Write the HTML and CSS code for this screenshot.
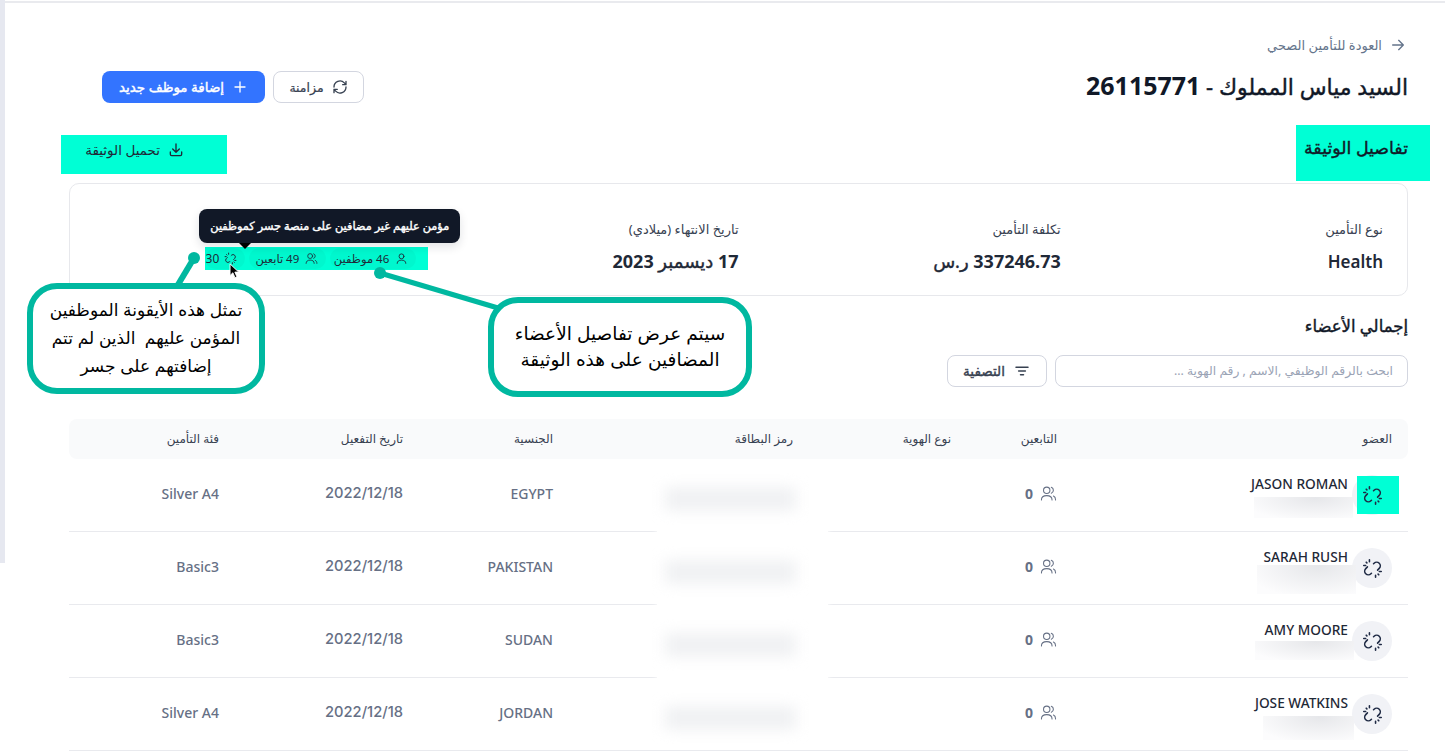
FILE: index.html
```html
<!DOCTYPE html>
<html lang="ar" dir="rtl">
  <head>
    <meta charset="UTF-8">
    <title>تفاصيل الوثيقة</title>
    <link rel="stylesheet" href="styles.css">
  </head>
  <body>
    <svg class="sprite" aria-hidden="true">
      <symbol id="i-unlink" viewBox="0 0 24 24" fill="none" stroke="currentColor" stroke-width="1.8" stroke-linecap="round">
        <path d="M13.200 6.600l.6-.6a4.200 4.200 0 0 1 5.900 0 4.200 4.200 0 0 1 0 5.900l-1.900 1.900"/>
        <path d="M10.800 17.400l-.6.6a4.200 4.200 0 0 1-5.900 0 4.200 4.200 0 0 1 0-5.900l1.900-1.900"/>
        <path d="M8.500 2v2.200M2 8.500h2.200M4.800 4.800l.8.8M15.500 19.800V22M19.800 15.500H22M18.400 18.400l.8.8"/>
      </symbol>
      <symbol id="i-user" viewBox="0 0 24 24" fill="none" stroke="currentColor" stroke-width="1.6" stroke-linecap="round">
        <circle cx="12" cy="8" r="4.500"/>
        <path d="M4 21c0-4.200 3.400-6 8-6s8 1.800 8 6"/>
      </symbol>
      <symbol id="i-users" viewBox="0 0 24 24" fill="none" stroke="currentColor" stroke-width="1.500" stroke-linecap="round">
        <circle cx="9.500" cy="7.500" r="4.500"/>
        <path d="M2 21c0-4.200 3-6 7.500-6s7.500 1.800 7.500 6"/>
        <path d="M16 3.300a4.500 4.500 0 0 1 0 8.400M19 15.500c1.900.8 3 2.600 3 5.500"/>
      </symbol>
    </svg>

    <div class="top-line"></div>
    <div class="layout">
      <div class="side-strip"></div>
      <main class="main">
        <a class="back-link">
          <svg class="icon-16" viewBox="0 0 24 24" fill="none" stroke="currentColor" stroke-width="2" stroke-linecap="round" stroke-linejoin="round"><path d="M4 12h16M13 5l7 7-7 7"/></svg>
          العودة للتأمين الصحي
        </a>

        <div class="page-head">
          <h1>السيد مياس المملوك - <span class="num">26115771</span></h1>
          <div class="actions">
            <button class="btn btn-outline btn-sync" type="button">
              <svg class="icon-16" viewBox="0 0 24 24" fill="none" stroke="currentColor" stroke-width="2" stroke-linecap="round" stroke-linejoin="round"><path d="M3 12a9 9 0 0 1 15.500-6.200L21 8.500M21 3.500v5h-5"/><path d="M21 12a9 9 0 0 1-15.500 6.200L3 15.500M3 20.500v-5h5"/></svg>
              مزامنة
            </button>
            <button class="btn btn-primary" type="button">
              <svg class="icon-16" viewBox="0 0 24 24" fill="none" stroke="currentColor" stroke-width="2" stroke-linecap="round"><path d="M12 4.500v15M4.500 12h15"/></svg>
              إضافة موظف جديد
            </button>
          </div>
        </div>

        <div class="section-head">
          <h2 class="section-title">تفاصيل الوثيقة</h2>
          <button class="btn-download" type="button">
            <svg class="icon-16" viewBox="0 0 24 24" fill="none" stroke="currentColor" stroke-width="2" stroke-linecap="round" stroke-linejoin="round"><path d="M12 3v12M7 10.500l5 5 5-5"/><path d="M3.500 15v3.500a2 2 0 0 0 2 2h13a2 2 0 0 0 2-2V15"/></svg>
            تحميل الوثيقة
          </button>
        </div>

        <section class="doc-card">
          <div class="doc-col">
            <div class="doc-label">نوع التأمين</div>
            <div class="doc-value"><span class="num value-latin">Health</span></div>
          </div>
          <div class="doc-col">
            <div class="doc-label">تكلفة التأمين</div>
            <div class="doc-value"><span class="num">337246.73</span> ر.س</div>
          </div>
          <div class="doc-col">
            <div class="doc-label">تاريخ الانتهاء (ميلادي)</div>
            <div class="doc-value"><span class="num">17</span> ديسمبر <span class="num">2023</span></div>
          </div>
          <div class="doc-col doc-col-pills">
            <div class="pills">
              <span class="pill pill-staff"><svg class="icon-13"><use href="#i-user"/></svg>46 موظفين</span>
              <span class="pill pill-deps"><svg class="icon-13"><use href="#i-users"/></svg>49 تابعين</span>
              <span class="pill pill-last"><svg class="icon-13"><use href="#i-unlink"/></svg>30</span>
              <div class="tooltip">مؤمن عليهم غير مضافين على منصة جسر كموظفين</div>
              <svg class="cursor" viewBox="0 0 12 18"><path d="M1 1v13l3.200-3 2.300 5.500 2.200-1-2.300-5.300h4.300z" fill="#000" stroke="#fff" stroke-width="1"/></svg>
            </div>
          </div>
        </section>

        <h2 class="members-title">إجمالي الأعضاء</h2>
        <div class="toolbar">
          <div class="search-box">ابحث بالرقم الوظيفي ,الاسم , رقم الهوية ...</div>
          <button class="btn btn-outline btn-filter" type="button">
            <svg class="icon-18" viewBox="0 0 24 24" fill="none" stroke="currentColor" stroke-width="2" stroke-linecap="round"><path d="M4 7h16M7.500 12h9M10 17h4"/></svg>
            التصفية
          </button>
        </div>

        <div class="table">
          <div class="table-head">
            <div>العضو</div>
            <div>التابعين</div>
            <div>نوع الهوية</div>
            <div>رمز البطاقة</div>
            <div>الجنسية</div>
            <div>تاريخ التفعيل</div>
            <div>فئة التأمين</div>
          </div>

          <div class="table-row">
            <div class="member">
              <span class="avatar avatar-marked"><svg class="icon-21"><use href="#i-unlink"/></svg></span>
              <div class="member-info">
                <div class="member-name">JASON ROMAN</div>
                <div class="member-id id-1"></div>
              </div>
            </div>
            <div class="deps"><svg class="icon-17"><use href="#i-users"/></svg><b>0</b></div>
            <div></div>
            <div></div>
            <div>EGYPT</div>
            <div class="cell-date">2022/12/18</div>
            <div>Silver A4</div>
          </div>

          <div class="table-row">
            <div class="member">
              <span class="avatar"><svg class="icon-21"><use href="#i-unlink"/></svg></span>
              <div class="member-info">
                <div class="member-name">SARAH RUSH</div>
                <div class="member-id id-2"></div>
              </div>
            </div>
            <div class="deps"><svg class="icon-17"><use href="#i-users"/></svg><b>0</b></div>
            <div></div>
            <div></div>
            <div>PAKISTAN</div>
            <div class="cell-date">2022/12/18</div>
            <div>Basic3</div>
          </div>

          <div class="table-row">
            <div class="member">
              <span class="avatar"><svg class="icon-21"><use href="#i-unlink"/></svg></span>
              <div class="member-info">
                <div class="member-name">AMY MOORE</div>
                <div class="member-id id-3"></div>
              </div>
            </div>
            <div class="deps"><svg class="icon-17"><use href="#i-users"/></svg><b>0</b></div>
            <div></div>
            <div></div>
            <div>SUDAN</div>
            <div class="cell-date">2022/12/18</div>
            <div>Basic3</div>
          </div>

          <div class="table-row">
            <div class="member">
              <span class="avatar"><svg class="icon-21"><use href="#i-unlink"/></svg></span>
              <div class="member-info">
                <div class="member-name">JOSE WATKINS</div>
                <div class="member-id id-4"></div>
              </div>
            </div>
            <div class="deps"><svg class="icon-17"><use href="#i-users"/></svg><b>0</b></div>
            <div></div>
            <div></div>
            <div>JORDAN</div>
            <div class="cell-date">2022/12/18</div>
            <div>Silver A4</div>
          </div>

          <div class="card-mask">
            <span class="card-blur"></span>
            <span class="card-blur"></span>
            <span class="card-blur"></span>
            <span class="card-blur"></span>
          </div>
        </div>
      </main>
    </div>

    <!-- annotations drawn over the screenshot -->
    <svg class="pointers" viewBox="0 0 1445 755">
      <path d="M194 258L176 288" stroke="#00b8a0" stroke-width="6" fill="none"/>
      <circle cx="194" cy="258" r="6" fill="#00b8a0"/>
      <path d="M380 273L498 308" stroke="#00b8a0" stroke-width="5" fill="none"/>
      <circle cx="380" cy="273" r="6" fill="#00b8a0"/>
    </svg>
    <div class="callout callout-left">تمثل هذه الأيقونة الموظفين<br>المؤمن عليهم&nbsp; الذين لم تتم<br>إضافتهم على جسر</div>
    <div class="callout callout-right">سيتم عرض تفاصيل الأعضاء<br>المضافين على هذه الوثيقة</div>
  </body>
</html>
```

FILE: styles.css
```css
* {
  margin: 0;
  padding: 0;
  box-sizing: border-box;
}

body {
  font-family: 'Noto Sans', 'DejaVu Sans', sans-serif;
  background: white;
  color: #1f2937;
  height: 755px;
  overflow: hidden;
  position: relative;
}

.sprite {
  position: absolute;
  width: 0;
  height: 0;
}

.top-line {
  height: 2px;
  margin-top: 1px;
  margin-left: 5px;
  background: #e9eaee;
}

.layout {
  display: flex;
  direction: ltr;
}

.side-strip {
  width: 5px;
  height: 563px;
  margin-top: -3px;
  background: #e6e8f0;
  flex-shrink: 0;
}

.main {
  direction: rtl;
  width: 1339px;
  margin-left: 64px;
  padding-top: 32px;
}

.icon-13 { width: 13px; height: 13px; flex-shrink: 0; }
.icon-16 { width: 16px; height: 16px; flex-shrink: 0; }
.icon-17 { width: 17px; height: 17px; flex-shrink: 0; }
.icon-18 { width: 18px; height: 18px; flex-shrink: 0; }
.icon-21 { width: 21px; height: 21px; flex-shrink: 0; }

.back-link {
  display: flex;
  align-items: center;
  gap: 8px;
  height: 20px;
  margin-right: 2px;
  font-size: 13px;
  color: #64748b;
}

.page-head {
  display: flex;
  justify-content: space-between;
  align-items: center;
  margin-top: 16px;
  height: 32px;
}

/* only DejaVu has a bold arabic cut and it runs too wide, so thicken the regular one */
h1,
.btn,
.section-title,
.doc-value,
.members-title,
.tooltip {
  font-weight: 400;
  -webkit-text-stroke: 0.4px currentColor;
}

.num {
  font-weight: 700;
  -webkit-text-stroke: 0;
}

h1 {
  margin-top: -4px;
  font-size: 22px;
  color: #111827;
  white-space: nowrap;
}

h1 .num {
  font-size: 25px;
}

.actions {
  display: flex;
  gap: 8px;
  margin-left: 33px;
}

.btn {
  display: flex;
  align-items: center;
  justify-content: center;
  gap: 8px;
  height: 32px;
  border-radius: 8px;
  border: 1px solid transparent;
  font-family: inherit;
  font-size: 13.5px;
}

.btn-outline {
  width: 91px;
  background: white;
  border-color: #d3d6e0;
  color: #374151;
}

.btn-sync {
  font-size: 12.5px;
  -webkit-text-stroke: 0.2px currentColor;
}

.btn-primary {
  width: 163px;
  background: #3374ff;
  color: white;
}

.section-head {
  display: flex;
  justify-content: space-between;
  align-items: flex-start;
  margin-top: 22px;
  height: 58px;
}

.section-title {
  width: 134px;
  height: 56px;
  margin-right: -22px;
  padding: 10px 22px 0 0;
  background: #00ffd5;
  font-size: 17.4px;
  white-space: nowrap;
  color: #111827;
}

.btn-download {
  display: flex;
  align-items: center;
  gap: 8px;
  width: 166px;
  height: 39px;
  margin-top: 10px;
  margin-left: -8px;
  padding-right: 43px;
  padding-bottom: 9px;
  border: none;
  background: #00ffd5;
  font-family: inherit;
  font-size: 13.5px;
  color: #1f2937;
}

.doc-card {
  display: grid;
  grid-template-columns: repeat(4, 1fr);
  height: 113px;
  padding: 34px 24px 0;
  border: 1px solid #e7e8ec;
  border-radius: 10px;
}

.doc-label {
  height: 22px;
  font-size: 13px;
  line-height: 22px;
  color: #374151;
}

.doc-value {
  margin-top: 9px;
  font-size: 18px;
  white-space: nowrap;
  color: #1f2937;
}

.value-latin {
  font-size: 17px;
  font-weight: 600;
}

.doc-col-pills {
  display: flex;
  padding-top: 29px;
  margin-right: -12px;
}

.pills {
  position: relative;
  display: flex;
  align-items: center;
  gap: 4px;
  width: 223px;
  height: 23px;
  padding-right: 12px;
  background: #00ffd5;
}

.pill {
  display: flex;
  align-items: center;
  gap: 6px;
  flex-shrink: 0;
  height: 21px;
  padding-right: 8px;
  border-radius: 11px;
  background: rgba(0, 0, 0, 0.03);
  font-size: 11.5px;
  white-space: nowrap;
  color: #1f2937;
}

.pill-staff { width: 86px; }
.pill-deps { width: 77px; }
.pill-last { width: 40px; gap: 5px; font-size: 12px; }

.tooltip {
  position: absolute;
  top: -38px;
  left: -6px;
  width: 261px;
  height: 34px;
  border-radius: 8px;
  background: #111827;
  box-shadow: 0 4px 10px rgba(17, 24, 39, 0.12);
  font-size: 11.3px;
  line-height: 34px;
  text-align: center;
  white-space: nowrap;
  color: white;
}

.tooltip::after {
  content: "";
  position: absolute;
  left: 40px;
  top: 34px;
  border: 6px solid transparent;
  border-bottom: none;
  border-top-color: #000;
}

.cursor {
  position: absolute;
  left: 24px;
  top: 16px;
  width: 11px;
  height: 16px;
}

.members-title {
  margin-top: 18px;
  height: 24px;
  font-size: 16.5px;
  line-height: 24px;
  color: #111827;
}

.toolbar {
  display: flex;
  gap: 8px;
  margin-top: 17px;
}

.search-box {
  width: 353px;
  height: 32px;
  padding: 0 14px;
  border: 1px solid #d3d6e0;
  border-radius: 8px;
  font-size: 12.3px;
  line-height: 30px;
  color: #9aa3b5;
}

.btn-filter {
  width: 100px;
}

.table {
  position: relative;
  margin-top: 32px;
}

.table-head,
.table-row {
  display: grid;
  grid-template-columns: 335px 106px 158px 240px 150px 184px 150px;
  align-items: center;
  padding-right: 16px;
}

.table-head {
  height: 40px;
  padding-bottom: 2px;
  border-radius: 8px;
  background: #f9fafb;
  font-size: 12px;
  color: #374151;
}

.table-row {
  height: 73px;
  border-bottom: 1px solid #e9eaee;
  font-size: 14px;
  font-weight: 500;
  color: #667085;
}

.table-row > div:not(.member) {
  margin-top: -4px;
}

.table-row > .cell-date {
  margin-top: -2px;
  font-family: 'Inter', 'Noto Sans', sans-serif;
  font-size: 14.7px;
  font-weight: 500;
}

.member {
  display: flex;
  align-items: center;
  gap: 4px;
}

.avatar {
  display: flex;
  align-items: center;
  justify-content: center;
  width: 40px;
  height: 40px;
  border-radius: 50%;
  background: #f1f2f6;
  color: #1f2a44;
}

.avatar-marked {
  position: relative;
  z-index: 0;
}

.avatar-marked::before {
  content: "";
  position: absolute;
  z-index: -1;
  top: 1px;
  left: 5px;
  width: 42px;
  height: 38px;
  background: #00ffd5;
}

.member-info {
  position: relative;
  width: 160px;
  height: 40px;
}

.member-name {
  margin-top: -1px;
  font-size: 13.7px;
  font-weight: 500;
  line-height: 20px;
  color: #1f2937;
}

.member-id {
  position: absolute;
  background: radial-gradient(ellipse 75% 110% at 62% 5%, #e6e7ea, #fcfcfd 100%);
}

.id-1 { top: 22px; right: -5px; width: 99px; height: 21px; }
.id-2 { top: 17px; right: -8px; width: 99px; height: 29px; }
.id-3 { top: 20px; right: -6px; width: 99px; height: 19px; }
.id-4 { top: 22px; right: -6px; width: 91px; height: 24px; }

.deps {
  display: flex;
  align-items: center;
  gap: 7px;
}

.deps b {
  font-weight: 700;
}

.card-mask {
  position: absolute;
  top: 68px;
  left: 588px;
  width: 171px;
  height: 258px;
  background: white;
  box-shadow: 0 0 6px white;
  display: flex;
  flex-direction: column;
  gap: 49px;
  padding: 0 32px 0 8px;
}

.card-blur {
  display: block;
  height: 24px;
  background: #f0f1f3;
  filter: blur(7px);
}

.pointers {
  position: absolute;
  top: 0;
  left: 0;
  width: 1445px;
  height: 755px;
  pointer-events: none;
}

.callout {
  position: absolute;
  display: flex;
  align-items: center;
  justify-content: center;
  border: 6px solid #00b8a0;
  border-radius: 30px;
  background: white;
  font-family: 'Liberation Sans', 'DejaVu Sans', sans-serif;
  text-align: center;
  color: #000;
}

.callout-left {
  left: 27px;
  top: 283px;
  width: 238px;
  height: 111px;
  font-size: 17px;
  line-height: 28px;
}

.callout-right {
  left: 488px;
  top: 297px;
  width: 264px;
  height: 100px;
  font-size: 18.5px;
  line-height: 26px;
}
```
